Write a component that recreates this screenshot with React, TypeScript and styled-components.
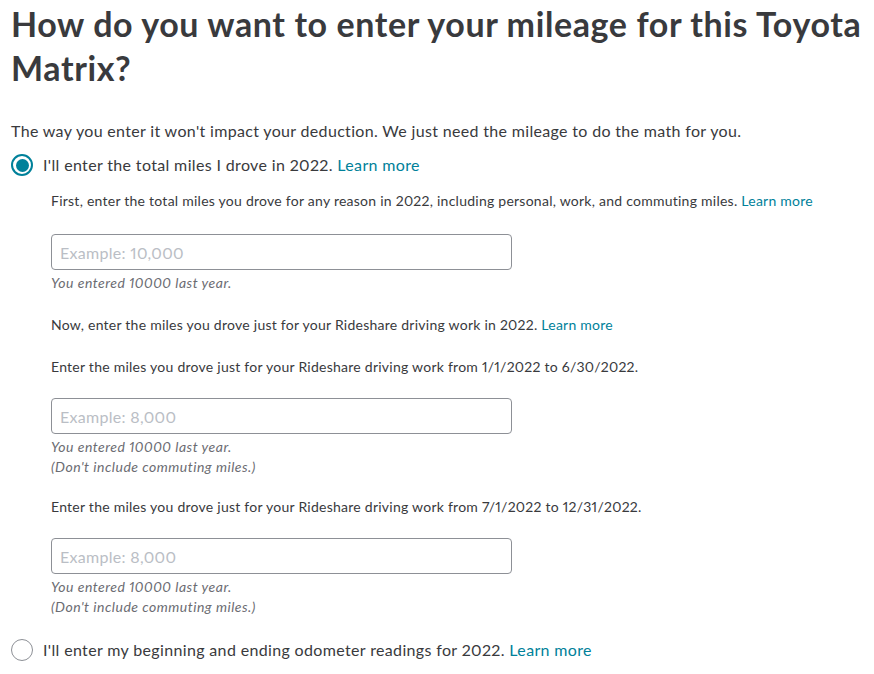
import React from "react";
import styled, { createGlobalStyle } from "styled-components";

const Global = createGlobalStyle`
  html, body { margin: 0; padding: 0; background: #fff; }
  body {
    font-family: Lato, "Noto Sans", sans-serif;
    color: #393a3d;
    font-variant-numeric: proportional-nums;
  }
  * { box-sizing: border-box; }
`;

const Page = styled.div`
  padding: 0 0 0 11px;
  width: 874px;
`;

const Heading = styled.h1`
  margin: 0;
  padding-top: 2px;
  font-size: 34px;
  line-height: 44px;
  font-weight: 700;
  color: #393a3d;
  letter-spacing: 0.6px;
`;

const Intro = styled.p`
  margin: 29px 0 0;
  font-size: 16px;
  line-height: 24px;
  letter-spacing: 0.33px;
`;

const Option = styled.div<{ $top: number }>`
  display: flex;
  align-items: center;
  gap: 10px;
  margin-top: ${(p) => p.$top}px;
  font-size: 16px;
  line-height: 24px;
  letter-spacing: 0.35px;
`;

const Radio = styled.span<{ $checked?: boolean }>`
  width: 22px;
  height: 22px;
  border-radius: 50%;
  border: ${(p) => (p.$checked ? "2px solid #00819a" : "1px solid #8d9096")};
  display: inline-flex;
  align-items: center;
  justify-content: center;
  flex-shrink: 0;
  &::after {
    content: "";
    display: ${(p) => (p.$checked ? "block" : "none")};
    width: 13px;
    height: 13px;
    border-radius: 50%;
    background: #00819a;
  }
`;

const Link = styled.a`
  color: #00819a;
  text-decoration: none;
`;

const Sub = styled.div`
  padding-left: 40px;
  display: flex;
  flex-direction: column;
`;

const SubText = styled.p<{ $top: number }>`
  margin: ${(p) => p.$top}px 0 0;
  font-size: 14px;
  line-height: 20px;
  letter-spacing: 0.25px;
`;

const Input = styled.input<{ $top: number }>`
  margin-top: ${(p) => p.$top}px;
  width: 461px;
  height: 36px;
  border: 1px solid #8d9096;
  border-radius: 4px;
  padding: 0 8px;
  font-family: Lato, "Noto Sans", sans-serif;
  font-variant-numeric: proportional-nums;
  font-size: 16px;
  letter-spacing: 0.3px;
  color: #393a3d;
  outline: none;
  &::placeholder { color: #babec5; }
`;

const HintGroup = styled.div`
  margin-top: 3px;
  display: flex;
  flex-direction: column;
`;

const Hint = styled.p`
  margin: 0;
  font-size: 14px;
  line-height: 20px;
  font-style: italic;
  letter-spacing: 0.5px;
  color: #6b6c72;
`;

export default function App() {
  return (
    <Page>
      <Global />
      <Heading>How do you want to enter your mileage for this Toyota Matrix?</Heading>
      <Intro>The way you enter it won't impact your deduction. We just need the mileage to do the math for you.</Intro>
      <Option $top={10}>
        <Radio $checked />
        <span>I'll enter the total miles I drove in 2022. <Link>Learn more</Link></span>
      </Option>
      <Sub>
        <SubText $top={14}>
          First, enter the total miles you drove for any reason in 2022, including personal, work, and commuting miles. <Link>Learn more</Link>
        </SubText>
        <Input $top={23} placeholder="Example: 10,000" />
        <HintGroup>
          <Hint>You entered 10000 last year.</Hint>
        </HintGroup>
        <SubText $top={22}>
          Now, enter the miles you drove just for your Rideshare driving work in 2022. <Link>Learn more</Link>
        </SubText>
        <SubText $top={22}>
          Enter the miles you drove just for your Rideshare driving work from 1/1/2022 to 6/30/2022.
        </SubText>
        <Input $top={21} placeholder="Example: 8,000" />
        <HintGroup>
          <Hint>You entered 10000 last year.</Hint>
          <Hint>(Don't include commuting miles.)</Hint>
        </HintGroup>
        <SubText $top={20}>
          Enter the miles you drove just for your Rideshare driving work from 7/1/2022 to 12/31/2022.
        </SubText>
        <Input $top={21} placeholder="Example: 8,000" />
        <HintGroup>
          <Hint>You entered 10000 last year.</Hint>
          <Hint>(Don't include commuting miles.)</Hint>
        </HintGroup>
      </Sub>
      <Option $top={21}>
        <Radio />
        <span>I'll enter my beginning and ending odometer readings for 2022. <Link>Learn more</Link></span>
      </Option>
    </Page>
  );
}
